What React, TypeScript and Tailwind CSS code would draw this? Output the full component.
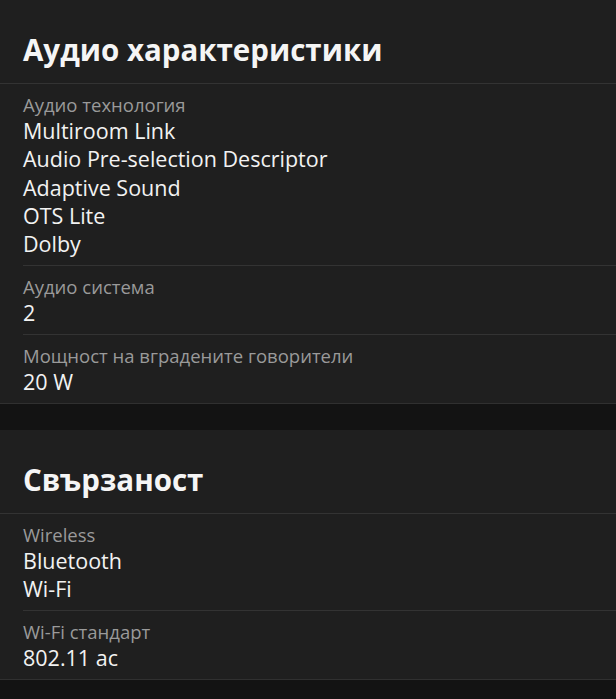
import React from "react";

type Row = { label: string; values: string[] };
type Section = { title: string; rows: Row[] };

const sections: Section[] = [
  {
    title: "Аудио характеристики",
    rows: [
      {
        label: "Аудио технология",
        values: ["Multiroom Link", "Audio Pre-selection Descriptor", "Adaptive Sound", "OTS Lite", "Dolby"],
      },
      { label: "Аудио система", values: ["2"] },
      { label: "Мощност на вградените говорители", values: ["20 W"] },
    ],
  },
  {
    title: "Свързаност",
    rows: [
      { label: "Wireless", values: ["Bluetooth", "Wi-Fi"] },
      { label: "Wi-Fi стандарт", values: ["802.11 ac"] },
    ],
  },
];

function SectionBlock({ s }: { s: Section }) {
  return (
    <div className="bg-[#1f1f1f] border-b border-[#303030]">
      <h2 className="pl-[23px] pt-[33px] pb-[16px] text-[29.5px] leading-[34px] font-bold text-[#f5f5f5] border-b border-[#333333]">
        {s.title}
      </h2>
      <div className="pl-[23px]">
        {s.rows.map((r, i) => (
          <div
            key={r.label}
            className={`pt-[9px] pb-[6.75px] ${i > 0 ? "border-t border-[#333333]" : ""}`}
          >
            <div className="text-[18.5px] leading-[24px] text-[#9a9a9a]">{r.label}</div>
            {r.values.map((v) => (
              <div key={v} className="text-[21.5px] leading-[28.25px] text-[#f2f2f2]">
                {v}
              </div>
            ))}
          </div>
        ))}
      </div>
    </div>
  );
}

export default function App() {
  return (
    <div
      className="min-h-[699px] bg-[#131313] flex flex-col gap-[26px]"
      style={{ fontFamily: '"Open Sans", "Noto Sans", sans-serif' }}
    >
      {sections.map((s) => (
        <SectionBlock key={s.title} s={s} />
      ))}
    </div>
  );
}
